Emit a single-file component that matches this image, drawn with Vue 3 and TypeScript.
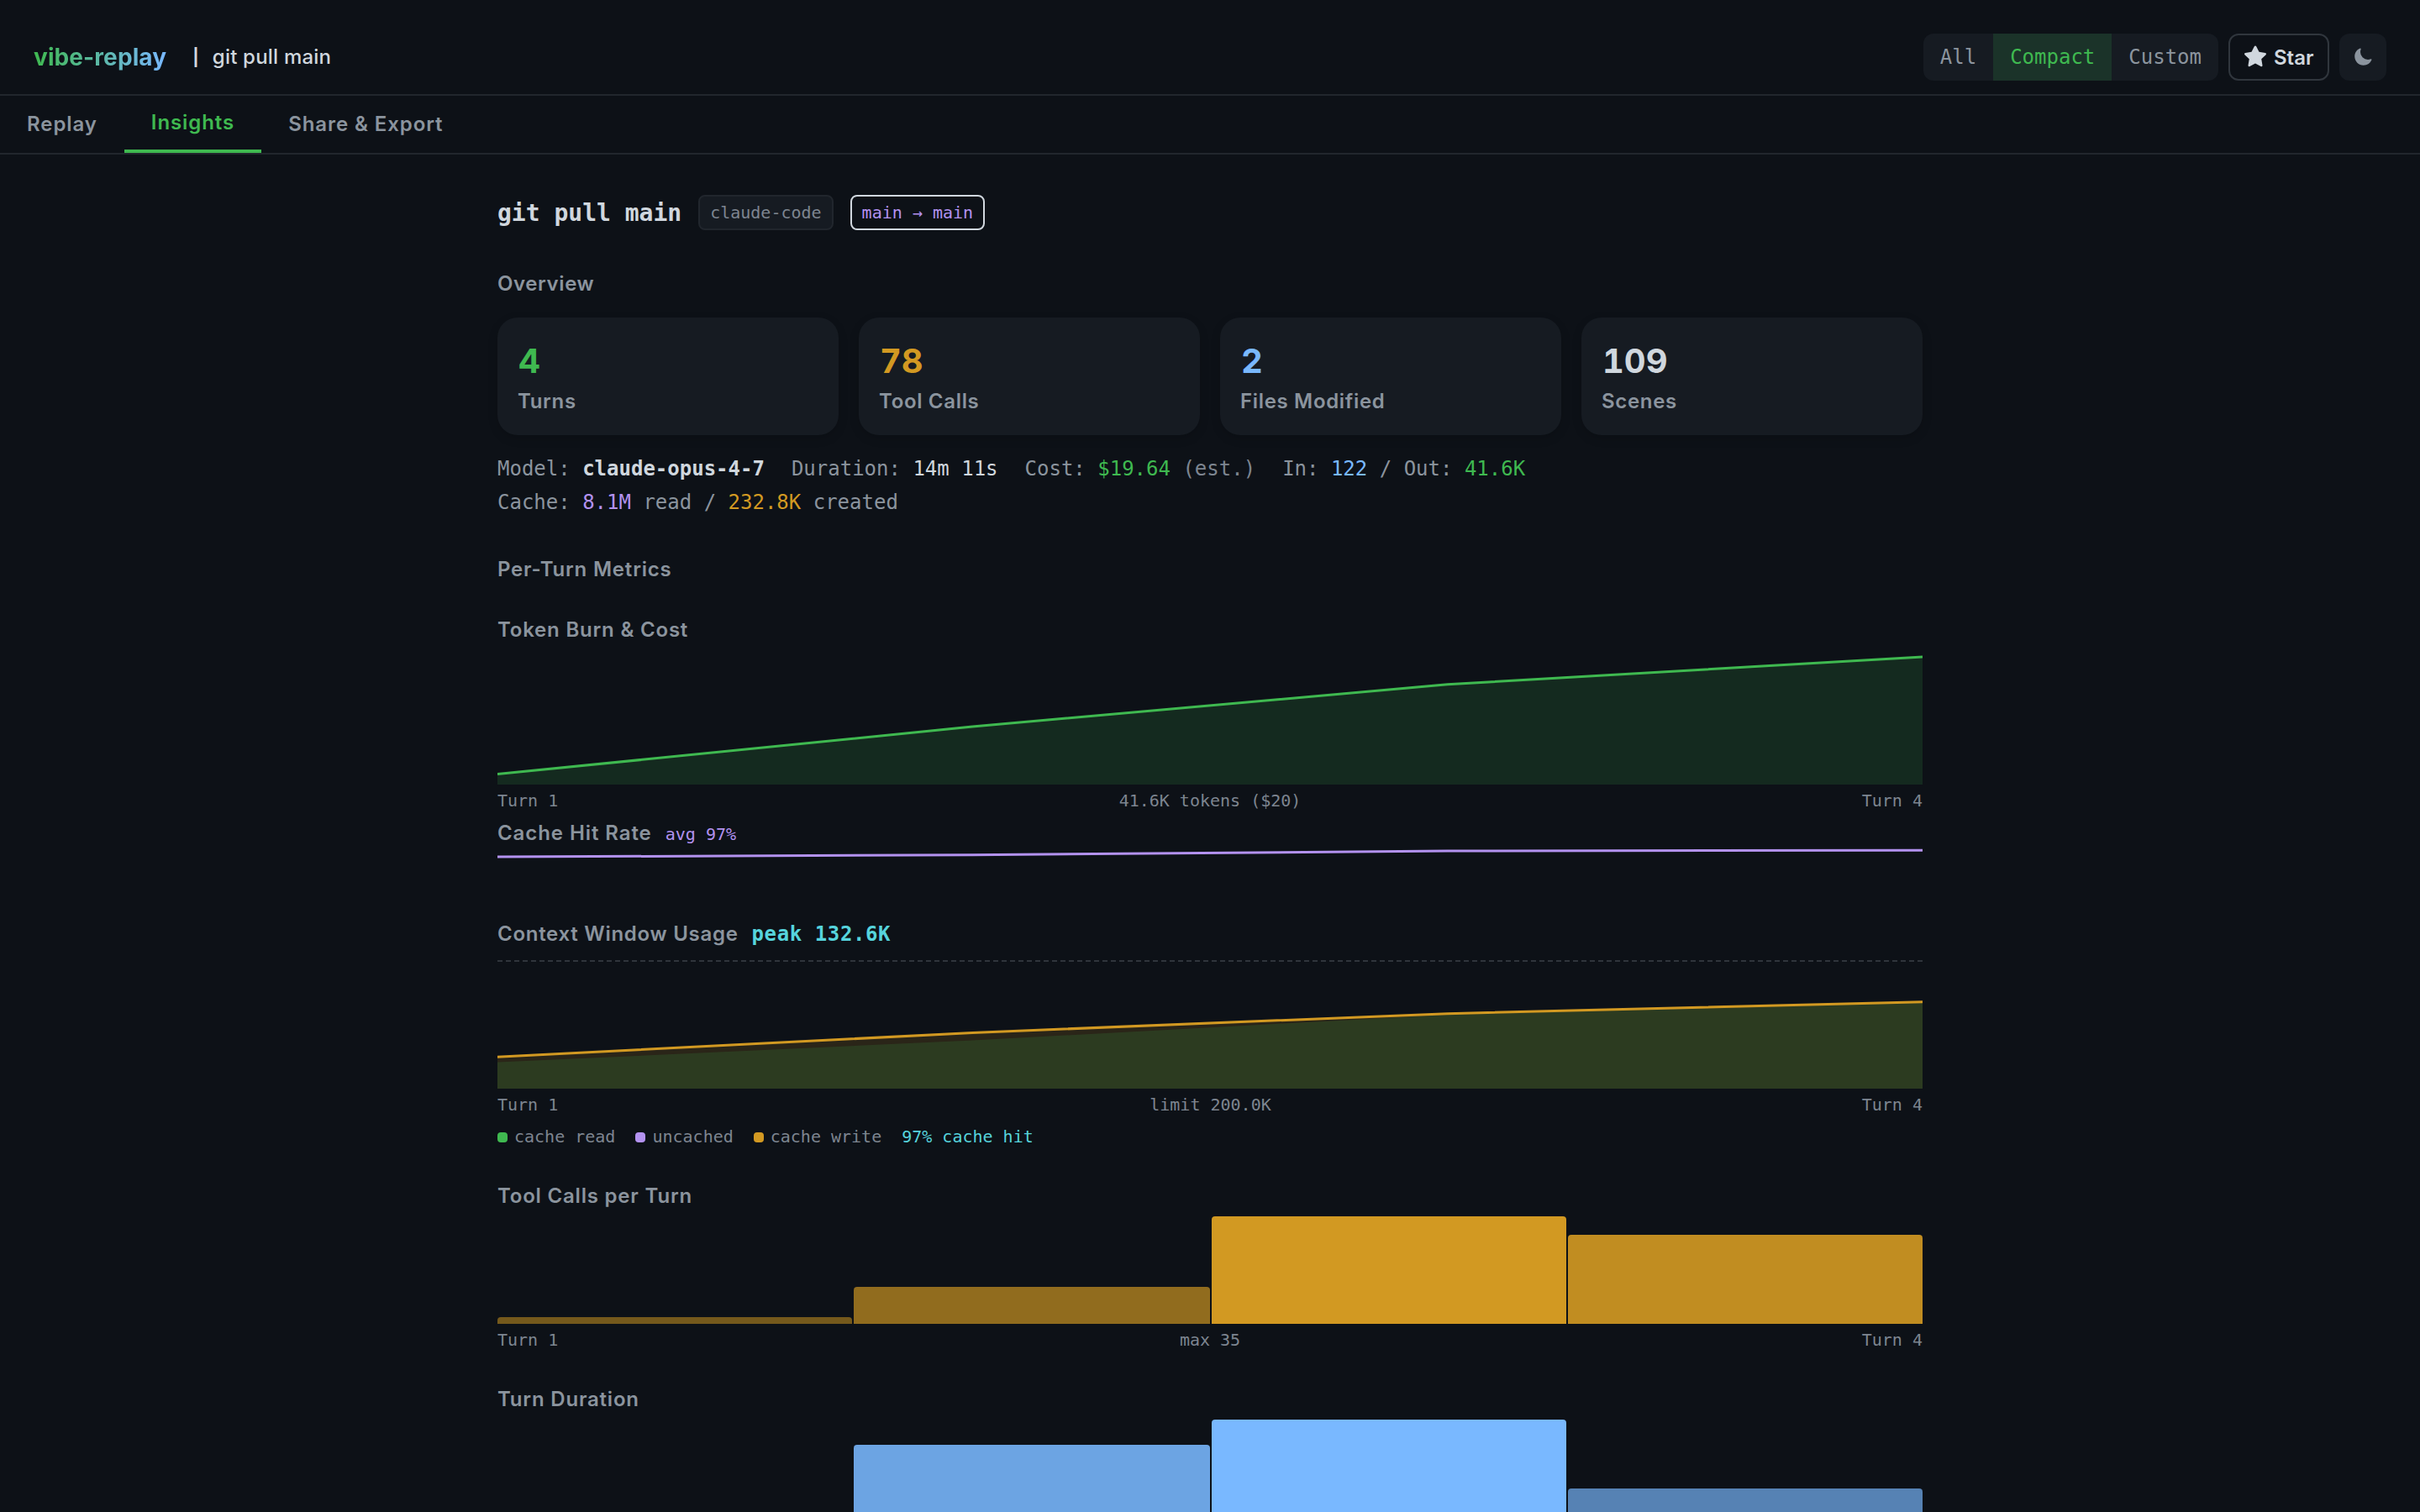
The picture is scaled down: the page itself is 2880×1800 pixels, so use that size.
<script setup lang="ts">
interface Stat { value: string; label: string; tone: string }
interface Bar { height: number; opacity: number }

const tabs = ['Replay', 'Insights', 'Share & Export']
const activeTab = 'Insights'
const modes = ['All', 'Compact', 'Custom']
const activeMode = 'Compact'

const stats: Stat[] = [
  { value: '4', label: 'Turns', tone: 'green' },
  { value: '78', label: 'Tool Calls', tone: 'orange' },
  { value: '2', label: 'Files Modified', tone: 'blue' },
  { value: '109', label: 'Scenes', tone: 'text' },
]

const BAR_AREA = 128
const toBars = (heights: number[]): Bar[] =>
  heights.map((height) => ({ height, opacity: 0.5 + 0.5 * (height / BAR_AREA) }))

const toolBars = toBars([8, 44, 128, 106])
const durationBars = toBars([8, 98, 128, 46])
</script>

<template>
  <div class="page">
    <header class="topbar">
      <div class="brand">
        <span class="logo">vibe-replay</span>
        <span class="session"><span class="pipe">|</span><span>git pull main</span></span>
      </div>
      <div class="actions">
        <div class="segment">
          <button v-for="m in modes" :key="m" :class="['seg', { on: m === activeMode }]">{{ m }}</button>
        </div>
        <button class="star">
          <svg width="28" height="28" viewBox="0 0 16 16"><path fill="currentColor" d="M8 .25a.75.75 0 0 1 .673.418l1.882 3.815 4.21.612a.75.75 0 0 1 .416 1.279l-3.046 2.97.719 4.192a.75.75 0 0 1-1.088.791L8 12.347l-3.766 1.98a.75.75 0 0 1-1.088-.79l.72-4.194L.818 6.374a.75.75 0 0 1 .416-1.28l4.21-.611L7.327.668A.75.75 0 0 1 8 .25Z" /></svg>
          <span>Star</span>
        </button>
        <button class="moon">
          <svg width="24" height="24" viewBox="0 0 24 24"><path fill="currentColor" d="M9.528 1.718a.75.75 0 0 1 .162.819A8.97 8.97 0 0 0 9 6a9 9 0 0 0 9 9 8.97 8.97 0 0 0 3.463-.69.75.75 0 0 1 .981.98 10.503 10.503 0 0 1-9.694 6.46c-5.799 0-10.5-4.7-10.5-10.5 0-4.368 2.667-8.112 6.46-9.694a.75.75 0 0 1 .818.162Z" /></svg>
        </button>
      </div>
    </header>

    <nav class="tabs">
      <a v-for="t in tabs" :key="t" :class="['tab', { active: t === activeTab }]">{{ t }}</a>
    </nav>

    <main class="content">
      <div class="title-row">
        <h1>git pull main</h1>
        <span class="badge">claude-code</span>
        <span class="badge branch">main → main</span>
      </div>

      <h2 class="overview">Overview</h2>
      <div class="cards">
        <div v-for="s in stats" :key="s.label" class="card">
          <div :class="['num', s.tone]">{{ s.value }}</div>
          <div class="label">{{ s.label }}</div>
        </div>
      </div>

      <div class="meta">
        <span>Model: <b class="text">claude-opus-4-7</b></span>
        <span>Duration: <span class="text">14m 11s</span></span>
        <span>Cost: <span class="green">$19.64</span> <span class="dim">(est.)</span></span>
        <span>In: <span class="blue">122</span> / Out: <span class="green">41.6K</span></span>
        <span>Cache: <span class="purple">8.1M</span> read / <span class="orange">232.8K</span> created</span>
      </div>

      <h2 class="metrics">Per-Turn Metrics</h2>

      <h3 class="burn">Token Burn &amp; Cost</h3>
      <svg class="chart" width="1696" height="160" viewBox="0 0 1696 160">
        <polygon points="0,147.6 565.3,91 1130.7,40.8 1696,8 1696,160 0,160" fill="#3fb950" fill-opacity=".15" />
        <polyline points="0,147.6 565.3,91 1130.7,40.8 1696,8" fill="none" stroke="#3fb950" stroke-width="3" />
      </svg>
      <div class="axis"><span>Turn 1</span><span>41.6K tokens ($20)</span><span>Turn 4</span></div>

      <h3 class="hit">Cache Hit Rate<span class="note purple">avg 97%</span></h3>
      <svg class="hit-chart" width="1696" height="64" viewBox="0 0 1696 64">
        <polyline points="0,13.1 565.3,10.7 1130.7,6 1696,5.2" fill="none" stroke="#b392f0" stroke-width="3" />
      </svg>

      <h3 class="context">Context Window Usage<b class="peak">peak 132.6K</b></h3>
      <svg class="chart" width="1696" height="160" viewBox="0 0 1696 160">
        <line x1="0" y1="8" x2="1696" y2="8" stroke="#8b949e" stroke-opacity=".27" stroke-width="2" stroke-dasharray="6 4" />
        <polygon points="0,122.3 565.3,93.4 1130.7,70.7 1696,56.7 1696,160 0,160" fill="#d29922" fill-opacity=".15" />
        <polygon points="0,128.6 565.3,102.5 1130.7,72 1696,57.5 1696,160 0,160" fill="#3fb950" fill-opacity=".15" />
        <polyline points="0,122.3 565.3,93.4 1130.7,70.7 1696,56.7" fill="none" stroke="#d29922" stroke-width="3" />
      </svg>
      <div class="axis"><span>Turn 1</span><span class="limit">limit 200.0K</span><span>Turn 4</span></div>
      <div class="legend">
        <span><i class="dot g"></i>cache read</span>
        <span><i class="dot p"></i>uncached</span>
        <span><i class="dot o"></i>cache write</span>
        <span class="cyan">97% cache hit</span>
      </div>

      <h3 class="block">Tool Calls per Turn</h3>
      <div class="bars">
        <div v-for="(b, i) in toolBars" :key="i" class="bar amber" :style="{ height: b.height + 'px', opacity: b.opacity }"></div>
      </div>
      <div class="axis"><span>Turn 1</span><span>max 35</span><span>Turn 4</span></div>

      <h3 class="block">Turn Duration</h3>
      <div class="bars">
        <div v-for="(b, i) in durationBars" :key="i" class="bar sky" :style="{ height: b.height + 'px', opacity: b.opacity }"></div>
      </div>
    </main>
  </div>
</template>

<style>
body { background: #0d1117; }
</style>

<style scoped>
.page {
  height: 1800px;
  overflow: hidden;
  background: #0d1117;
  color: #8b949e;
  font-family: Inter, "Liberation Sans", sans-serif;
  font-size: 24px;
}
.page *, .page { box-sizing: border-box; }
button { font: inherit; color: inherit; background: none; border: 0; padding: 0; margin: 0; }
h1, h2, h3 { margin: 0; }
svg { display: block; flex: none; }

.topbar {
  display: flex;
  justify-content: space-between;
  align-items: center;
  height: 114px;
  padding: 24px 40px 0;
  border-bottom: 2px solid #21262d;
}
.brand { display: flex; align-items: center; margin-top: -1px; }
.logo {
  font-size: 28px;
  font-weight: 700;
  line-height: 40px;
  letter-spacing: 0.1px;
  background: linear-gradient(90deg, #3fb950, #79b8ff);
  -webkit-background-clip: text;
  background-clip: text;
  color: transparent;
}
.session {
  display: flex;
  align-items: center;
  gap: 16px;
  margin-left: 31px;
  color: #d0d7de;
  font-weight: 500;
  letter-spacing: 0.2px;
}
.pipe { font-size: 20px; font-weight: 700; }
.actions { display: flex; gap: 12px; }
.segment {
  display: flex;
  height: 56px;
  border-radius: 12px;
  overflow: hidden;
  background: #161b22;
  font-family: "DejaVu Sans Mono", monospace;
}
.seg { padding: 0 20px; }
.seg.on { background: #1b3329; color: #3fb950; }
.star {
  display: flex;
  align-items: center;
  gap: 8px;
  width: 120px;
  height: 56px;
  padding: 0 16px;
  border: 2px solid #30363d;
  border-radius: 12px;
  color: #d0d7de;
  font-weight: 600;
}
.moon {
  display: flex;
  align-items: center;
  justify-content: center;
  width: 56px;
  height: 56px;
  border-radius: 12px;
  background: #161b22;
}

.tabs { display: flex; height: 70px; border-bottom: 2px solid #21262d; }
.tab { height: 68px; padding: 0 32px; line-height: 68px; font-weight: 600; letter-spacing: 0.92px; }
.tab.active { color: #3fb950; line-height: 64px; border-bottom: 4px solid #3fb950; }

.content { width: 1696px; margin: 0 auto; padding-top: 48px; }
.title-row { display: flex; align-items: center; gap: 20px; height: 42px; font-family: "DejaVu Sans Mono", monospace; }
h1 { height: 42px; font-size: 28px; font-weight: 700; line-height: 44px; color: #d0d7de; }
.badge {
  height: 42px;
  padding: 0 12px;
  border: 2px solid #21262d;
  border-radius: 8px;
  background: #161b22;
  font-size: 20px;
  line-height: 38px;
  color: #7d8590;
}
.badge.branch { background: none; border-color: #d0d7de; color: #b392f0; }

h2, h3 { font-size: 24px; font-weight: 600; line-height: 34px; height: 32px; letter-spacing: 0.8px; }
.overview { margin-top: 47px; letter-spacing: 0.6px; }
.cards { display: grid; grid-template-columns: repeat(4, 1fr); gap: 24px; margin-top: 25px; }
.card {
  height: 140px;
  padding: 32px 24px 0;
  border-radius: 24px;
  background: #161b22;
  box-shadow: 0 4px 12px rgba(0, 0, 0, 0.15);
}
.num { padding-left: 1px; font-size: 40px; line-height: 40px; font-weight: 700; font-variant-numeric: tabular-nums; }
.label { margin-top: 11px; line-height: 34px; font-weight: 600; letter-spacing: 0.67px; }

.meta {
  display: flex;
  flex-wrap: wrap;
  column-gap: 32px;
  margin-top: 20px;
  line-height: 40px;
  font-family: "DejaVu Sans Mono", monospace;
}
.text { color: #d0d7de; }
.green { color: #3fb950; }
.orange { color: #d29922; }
.blue { color: #79b8ff; }
.purple { color: #b392f0; }
.cyan { color: #56d4dd; }
.dim { color: #7d8590; }

.metrics { margin-top: 43px; }
.burn { margin-top: 40px; }
.chart { margin-top: 9px; }
.axis {
  display: flex;
  justify-content: space-between;
  margin-top: 5px;
  height: 28px;
  line-height: 28px;
  font-family: "DejaVu Sans Mono", monospace;
  font-size: 20px;
  color: #7d8590;
}
.limit { padding-left: 1px; }
.hit { margin-top: 8px; letter-spacing: 0.92px; }
.note, .peak { font-family: "DejaVu Sans Mono", monospace; margin-left: 16px; line-height: 1; }
.note { font-size: 20px; font-weight: 400; letter-spacing: 0; }
.peak { font-weight: 700; letter-spacing: 0.6px; color: #56d4dd; }
.context { margin-top: 24px; letter-spacing: 0.72px; }
.legend {
  display: flex;
  gap: 24px;
  margin-top: 10px;
  height: 28px;
  line-height: 28px;
  font-family: "DejaVu Sans Mono", monospace;
  font-size: 20px;
  color: #7d8590;
}
.legend span { display: flex; align-items: center; }
.dot { width: 12px; height: 12px; margin: 2px 8px 0 0; border-radius: 4px; }
.dot.g { background: #3fb950; }
.dot.p { background: #b392f0; }
.dot.o { background: #d29922; }

.block { margin-top: 40px; }
.bars {
  display: grid;
  grid-template-columns: 422px 424px 422px 422px;
  align-items: end;
  gap: 2px;
  height: 128px;
  margin-top: 9px;
}
.bar { border-radius: 4px 4px 0 0; }
.amber { background: #d29922; }
.sky { background: #79b8ff; }
</style>
